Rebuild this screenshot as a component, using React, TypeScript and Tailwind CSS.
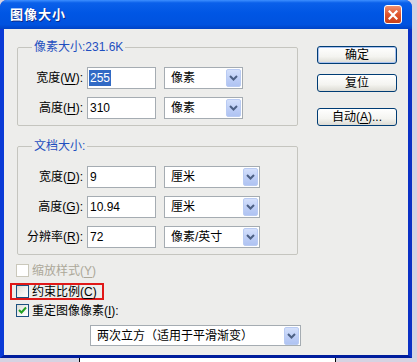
import React from "react";

const FONT = "font-['Liberation_Sans','Noto_Sans_CJK_SC',sans-serif]";

function Key({ k }: { k: string }) {
  return <span className="underline underline-offset-[2px] decoration-1">{k}</span>;
}

function Arrow() {
  return (
    <span className="w-[15px] h-[18px] rounded-[2px] border border-[#b9cbf3] bg-[linear-gradient(180deg,#d4e0fb_0%,#bccdf6_60%,#afc3f2_100%)] flex items-center justify-center">
      <svg width="9" height="6" viewBox="0 0 9 6">
        <path d="M1 1 L4.5 4.5 L8 1" fill="none" stroke="#4d6185" strokeWidth="2" />
      </svg>
    </span>
  );
}

function Select({ value, w }: { value: string; w: string }) {
  return (
    <div className={`${w} h-[22px] border border-[#a5acb2] bg-white flex items-center justify-between pl-[6px] pr-[1px]`}>
      <span>{value}</span>
      <Arrow />
    </div>
  );
}

function Field({
  label,
  k,
  value,
  unit,
  selW,
  selected,
}: {
  label: string;
  k: string;
  value: string;
  unit: string;
  selW: string;
  selected?: boolean;
}) {
  return (
    <div className="flex items-center h-[22px]">
      <div className="w-[65px] text-right whitespace-nowrap">
        {label}(<Key k={k} />):
      </div>
      <div className="ml-[4px] w-[69px] h-[22px] border border-[#a5acb2] bg-white flex items-center pl-[1px]">
        {selected ? (
          <span className="bg-[#316ac5] text-white px-[1px] leading-[16px]">{value}</span>
        ) : (
          <span className="px-[1px]">{value}</span>
        )}
      </div>
      <div className="ml-[8px]">
        <Select value={unit} w={selW} />
      </div>
    </div>
  );
}

function Group({ title, children }: { title: string; children: React.ReactNode }) {
  return (
    <fieldset className="border border-[#c5c5bf] rounded-[2px] px-0 pt-[12px] pb-[6px] flex flex-col gap-[8px]">
      <legend className="ml-[14px] px-[2px] text-[#1f4fbf] leading-[16px]">{title}</legend>
      {children}
    </fieldset>
  );
}

function XpButton({ children, def }: { children: React.ReactNode; def?: boolean }) {
  return (
    <div
      className={`w-[80px] h-[18px] rounded-[3px] border border-[#003c74] bg-[linear-gradient(180deg,#ffffff_0%,#f4f4f0_60%,#dcdbd4_100%)] flex items-center justify-center leading-none ${
        def ? "shadow-[inset_0_0_0_1px_#a9c2ef]" : ""
      }`}
    >
      {children}
    </div>
  );
}

function Check({ state }: { state: "off" | "on" | "disabled" }) {
  if (state === "disabled") {
    return <span className="w-[13px] h-[13px] border border-[#cac8bb] bg-white shrink-0" />;
  }
  return (
    <span className="w-[13px] h-[13px] border border-[#1c5180] bg-[linear-gradient(135deg,#dcdcd7_0%,#f5f5f3_60%,#ffffff_100%)] shrink-0 flex items-center justify-center">
      {state === "on" && (
        <svg width="9" height="9" viewBox="0 0 9 9">
          <path d="M1 4 L3.5 6.5 L8 1.5" fill="none" stroke="#21a121" strokeWidth="2" />
        </svg>
      )}
    </span>
  );
}

export default function App() {
  return (
    <div className={`w-[417px] h-[362px] bg-[#d6d3e2] flex flex-col text-[12px] text-black ${FONT}`}>
      <div className="flex h-[358px]">
        <div className="w-[412px] h-[358px] flex flex-col rounded-t-[7px] overflow-hidden bg-[#0a3ad6]">
          <div className="h-[29px] shrink-0 flex items-center justify-between pl-[10px] pr-[10px] bg-[linear-gradient(180deg,#3d8fff_0%,#0a60ea_10%,#0056e4_45%,#0052df_85%,#0043c6_100%)]">
            <span className="text-white font-bold text-[13px] tracking-[1px] [text-shadow:1px_1px_0_#0a2a8a]">图像大小</span>
            <span className="w-[18px] h-[19px] rounded-[3px] border border-white bg-[linear-gradient(180deg,#f09070_0%,#e0542c_50%,#c8401c_100%)] flex items-center justify-center">
              <svg width="10" height="10" viewBox="0 0 10 10">
                <path d="M1.5 1.5 L8.5 8.5 M8.5 1.5 L1.5 8.5" stroke="white" strokeWidth="2.2" strokeLinecap="square" />
              </svg>
            </span>
          </div>
          <div className="flex-1 border-l-4 border-r-4 border-b-[3px] border-l-[#0a3ad6] border-r-[#0b30c4] border-b-[#001d9c] bg-[#ededeb] flex flex-col">
            <div className="flex pl-[13px] pt-[10px]">
              <div className="w-[281px] flex flex-col gap-[12px]">
                <Group title="像素大小:231.6K">
                  <Field label="宽度" k="W" value="255" unit="像素" selW="w-[79px]" selected />
                  <Field label="高度" k="H" value="310" unit="像素" selW="w-[79px]" />
                </Group>
                <Group title="文档大小:">
                  <Field label="宽度" k="D" value="9" unit="厘米" selW="w-[96px]" />
                  <Field label="高度" k="G" value="10.94" unit="厘米" selW="w-[96px]" />
                  <Field label="分辨率" k="R" value="72" unit="像素/英寸" selW="w-[96px]" />
                </Group>
              </div>
              <div className="ml-[19px] pt-[7px] flex flex-col">
                <XpButton def>确定</XpButton>
                <div className="mt-[10px]">
                  <XpButton>复位</XpButton>
                </div>
                <div className="mt-[16px]">
                  <XpButton>
                    自动(<Key k="A" />)...
                  </XpButton>
                </div>
              </div>
            </div>
            <div className="flex flex-col pl-[12px] pt-[9px]">
              <div className="flex items-center gap-[3px] h-[13px] text-[#aca899]">
                <Check state="disabled" />
                <span>
                  缩放样式(<Key k="Y" />)
                </span>
              </div>
              <div className="mt-[6px] -ml-[6px] w-[94px] h-[17px] border-2 border-[#e01818] pl-[4px] flex items-center gap-[3px]">
                <Check state="off" />
                <span className="whitespace-nowrap">
                  约束比例(<Key k="C" />)
                </span>
              </div>
              <div className="mt-[4px] flex items-center gap-[3px] h-[13px]">
                <Check state="on" />
                <span>
                  重定图像像素(<Key k="I" />):
                </span>
              </div>
              <div className="mt-[8px] ml-[74px] w-[211px] h-[21px] border border-[#a5acb2] bg-white flex items-center justify-between pl-[6px] pr-[1px]">
                <span>两次立方（适用于平滑渐变）</span>
                <Arrow />
              </div>
            </div>
          </div>
        </div>
      </div>
      <div className="flex h-[4px]">
        <div className="w-[79px] bg-[#d6d3e2]" />
        <div className="w-[257px] bg-white border-l border-r border-black" />
        <div className="flex-1 bg-[#d6d3e2]" />
      </div>
    </div>
  );
}
